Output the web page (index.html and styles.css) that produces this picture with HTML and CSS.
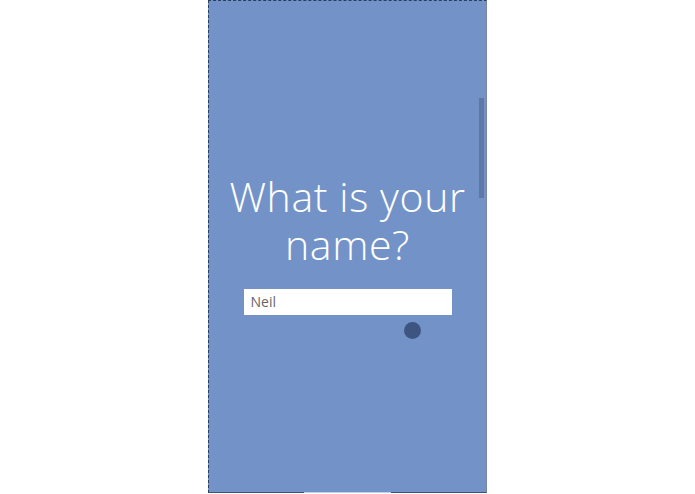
FILE: index.html
```html
<!DOCTYPE html>
<html>
<head>
<meta charset="utf-8">
<link rel="stylesheet" href="styles.css">
</head>
<body>
<div class="stage">
  <div class="phone">
    <h1 class="question">What is your name?</h1>
    <div class="field">Neil</div>
    <div class="dot-row"><span class="dot"></span></div>
    <div class="scrollbar"></div>
    <div class="home-bar"></div>
  </div>
</div>
</body>
</html>
```
FILE: styles.css
```css
html, body {
  margin: 0;
  padding: 0;
  background: #ffffff;
  height: 100%;
}
.stage {
  display: flex;
  justify-content: center;
  height: 494px;
}
.phone {
  position: relative;
  width: 279px;
  height: 493px;
  background: #7393c8;
  border-left: 1px dashed #2c3e5c;
  border-top: 1px dashed #2c3e5c;
  border-right: 1px solid #7a8598;
  border-bottom: 1px solid #3f5478;
  box-sizing: border-box;
  display: flex;
  flex-direction: column;
  align-items: center;
  padding-top: 171px;
  font-family: "Open Sans", "Liberation Sans", sans-serif;
}
.question {
  margin: 0;
  width: 270px;
  text-align: center;
  color: #ffffff;
  font-weight: 300;
  font-size: 41px;
  line-height: 48px;
  letter-spacing: 0.6px;
}
.field {
  margin-top: 21px;
  width: 208px;
  height: 26px;
  box-sizing: border-box;
  background: #ffffff;
  color: #666666;
  font-size: 14px;
  line-height: 26px;
  padding-left: 7px;
}
.dot-row {
  width: 208px;
  display: flex;
  justify-content: flex-end;
  padding-right: 31px;
  box-sizing: border-box;
  margin-top: 7px;
}
.dot {
  width: 17px;
  height: 17px;
  border-radius: 50%;
  background: #3e5581;
}
.scrollbar {
  position: absolute;
  left: 270px;
  top: 97px;
  width: 5px;
  height: 100px;
  background: #5f78a8;
}
.home-bar {
  position: absolute;
  left: 95px;
  bottom: -1px;
  width: 87px;
  height: 1px;
  background: #c0d0ea;
}
```
